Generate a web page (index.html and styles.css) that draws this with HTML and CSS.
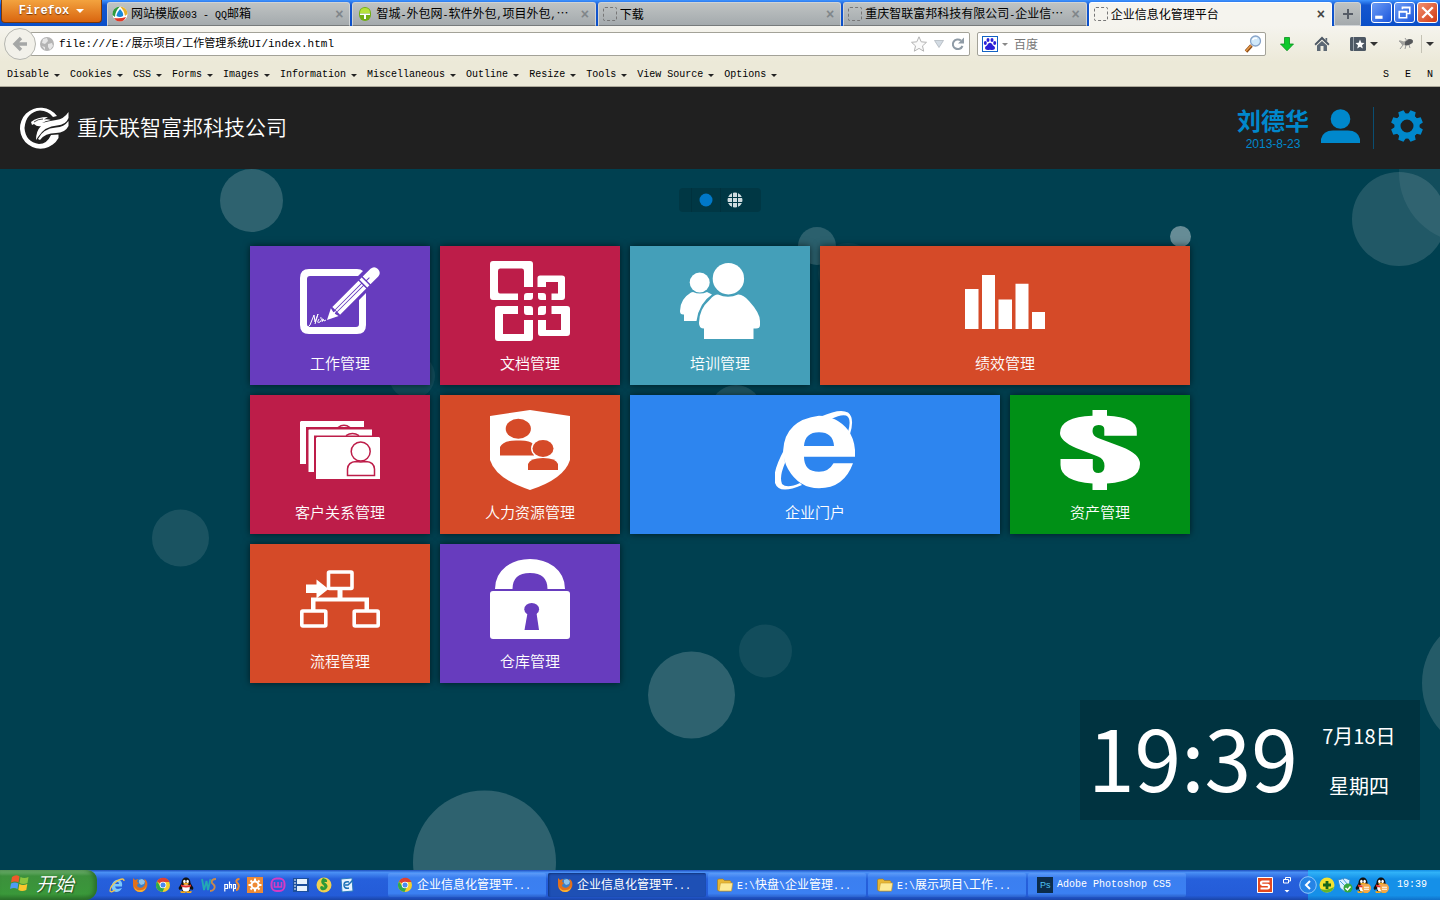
FILE: index.html
```html
<!DOCTYPE html>
<html lang="zh-CN">
<head>
<meta charset="utf-8">
<title>企业信息化管理平台</title>
<link rel="stylesheet" href="styles.css">
</head>
<body>
<svg class="defs" aria-hidden="true">
  <symbol id="chrome" viewBox="0 0 16 16"><circle cx="8" cy="8" r="7" fill="#f4cf2c"/><path d="M8 8L2 4.400A7 7 0 0 1 14.500 5H8Z" fill="#dd4132"/><path d="M2 4.400A7 7 0 0 0 7.500 15L10 9.500 5.400 9.500Z" fill="#2da94f"/><circle cx="8" cy="8" r="3.300" fill="#fff"/><circle cx="8" cy="8" r="2.500" fill="#4a8af0"/></symbol>
  <symbol id="firefox" viewBox="0 0 16 16"><circle cx="8.500" cy="7.500" r="6" fill="#3b7fc9"/><path d="M7 3l3-1 3 2-1 3-3 1-2-2z" fill="#8fc3ea"/><path d="M1 1l2 2 3-1-1 3 2 1-2 2c0 3 5 4 7 1 2-2 1-5 0-7 3 1 4 4 3 8-1 3-4 5-7 5-4 0-7-3-7-7z" fill="#e2701b"/><path d="M2 8c0 4 4 6 7 5 3 0 5-2 5-4 0 4-3 6-6 6-4 0-6-3-6-7z" fill="#f9b233"/></symbol>
  <symbol id="qq" viewBox="0 0 16 16"><path d="M3.500 6c0-7.500 9-7.500 9 0l3 5-1 2-2-1-1 3H4.500l-1-3-2 1-1-2z" fill="#111"/><ellipse cx="8" cy="11" rx="3.800" ry="3.800" fill="#fff"/><ellipse cx="6.400" cy="4.500" rx="1.300" ry="1.700" fill="#fff"/><ellipse cx="9.600" cy="4.500" rx="1.300" ry="1.700" fill="#fff"/><path d="M3 7.500q5 2 10 0v2q-5 2-10 0z" fill="#e3302b"/><ellipse cx="8" cy="6.700" rx="2.800" ry="1" fill="#f6a91c"/><path d="M2 14.300h5.500v1.700h-4.500zM8.500 14.300h5.500l-1 1.700h-4.500z" fill="#f6a91c"/></symbol>
  <symbol id="qq-off" viewBox="0 0 16 16"><use href="#qq"/><circle cx="11.500" cy="11" r="4.500" fill="#f3a84c"/><path d="M9 9.800h5v1H9zM9 11.800h5v1H9z" fill="#fff"/></symbol>
  <symbol id="folder" viewBox="0 0 16 16"><path d="M.5 3L1.500 2H6l1.500 1.500H13l1 1V14H1.500l-1-1z" fill="#e8b836" stroke="#a3771a" stroke-width=".6"/><path d="M3.500 6H15.700L14.500 14H2Z" fill="#fdeb96" stroke="#c99b2a" stroke-width=".6"/></symbol>
</svg>

<header class="browser">
  <div class="tabbar">
    <button class="fx-button"><span>Firefox</span><i class="caret"></i></button>
    <nav class="tabs">
      <div class="tab"><svg class="fav" viewBox="0 0 16 16"><circle cx="8" cy="8" r="7.500" fill="#fff"/><path d="M8 .5A7.500 7.500 0 0 0 .5 9L3 11Q3 5 8 .5Z" fill="#2f9a3c"/><path d="M8 .5Q15 1 15.500 8L13 10Q12 4 8 .5Z" fill="#e8b028"/><path d="M2 12Q8 13 14 11 12 15.500 8 15.500T2 12Z" fill="#e03a28"/><path d="M8 3Q12 7 11 10 8 12 4.500 10 4.500 7 8 3Z" fill="#1788d8"/></svg><span class="tab-title">网站模版<span class="lt">003 - QQ</span>邮箱</span><button class="tab-x" aria-label="关闭">×</button></div>
      <div class="tab"><svg class="fav" viewBox="0 0 16 16"><rect x="2" y="1" width="12" height="14" rx="6" fill="#71ae14"/><path d="M3 7Q3 2 8 2T13 7Z" fill="#b6e23a"/><path d="M3 7.500H13V9H9V13H7V9H3Z" fill="#fff"/></svg><span class="tab-title">智城<span class="lt">-</span>外包网<span class="lt">-</span>软件外包<span class="lt">,</span>项目外包<span class="lt">,</span>…</span><button class="tab-x" aria-label="关闭">×</button></div>
      <div class="tab"><i class="fav blank"></i><span class="tab-title">下载</span><button class="tab-x" aria-label="关闭">×</button></div>
      <div class="tab"><i class="fav blank"></i><span class="tab-title">重庆智联富邦科技有限公司<span class="lt">-</span>企业信…</span><button class="tab-x" aria-label="关闭">×</button></div>
      <div class="tab active"><i class="fav blank"></i><span class="tab-title">企业信息化管理平台</span><button class="tab-x" aria-label="关闭">×</button></div>
    </nav>
    <button class="new-tab" aria-label="新标签页"><svg viewBox="0 0 12 12"><path d="M6 1V11M1 6H11" stroke="#555c66" stroke-width="2"/></svg></button>
    <div class="win-buttons">
      <button class="win" aria-label="最小化"><svg viewBox="0 0 18 18"><path d="M3 12h7v3H3z" fill="#fff"/></svg></button>
      <button class="win" aria-label="还原"><svg viewBox="0 0 18 18" fill="none" stroke="#fff" stroke-width="1.500"><path d="M7 6V4H14V10H11M7 4.500H14"/><path d="M4 8H11V14H4ZM4 8.500H11"/></svg></button>
      <button class="win close" aria-label="关闭窗口"><svg viewBox="0 0 18 18"><path d="M4 4L14 14M14 4L4 14" stroke="#fff" stroke-width="2.200"/></svg></button>
    </div>
  </div>

  <div class="navbar">
    <button class="back" aria-label="后退"><svg viewBox="0 0 18 18"><path d="M10 3L4 9L10 15M4 9H16" fill="none" stroke="#a5a7a6" stroke-width="3.400"/></svg></button>
    <div class="url">
      <svg class="globe" viewBox="0 0 14 14"><circle cx="7" cy="7" r="7" fill="#b4b4b4"/><path d="M3 2l4-1 1 3-3 3-3-1zM8 7l4-1 1 3-3 4-2-3zM2 9l3 1v3z" fill="#e6e6e6"/></svg>
      <input class="url-input" type="text" aria-label="地址" value="file:///E:/展示项目/工作管理系统UI/index.html">
      <svg class="i16" viewBox="0 0 16 16"><path d="M8 .8L10.200 5.800 15.500 6.300 11.500 9.900 12.700 15.200 8 12.400 3.300 15.200 4.500 9.900 .5 6.300 5.800 5.800Z" fill="#fafafa" stroke="#b4b4b4"/></svg>
      <svg class="i10" viewBox="0 0 10 10"><path d="M.5 1.500H9.500L5 8.500Z" fill="#d3dbe3" stroke="#a9b0b8" stroke-width=".7"/></svg>
      <svg class="i14" viewBox="0 0 14 14"><path d="M11.500 9A5 4.800 0 1 1 10 3.500" fill="none" stroke="#8f9ba6" stroke-width="2"/><path d="M13 .5V6.500H7Z" fill="#8f9ba6"/></svg>
    </div>
    <div class="search">
      <svg class="i16" viewBox="0 0 16 16"><rect x=".5" y=".5" width="15" height="15" fill="#fff" stroke="#1463c4"/><g fill="#2a20d8"><ellipse cx="3.300" cy="7" rx="1.500" ry="2"/><ellipse cx="6" cy="3.900" rx="1.500" ry="2"/><ellipse cx="10" cy="3.900" rx="1.500" ry="2"/><ellipse cx="12.700" cy="7" rx="1.500" ry="2"/><path d="M8 6.700Q10 7 11 9.500 14 11 12.500 13.300 11 14.500 8 13.700 5 14.500 3.500 13.300 2 11 5 9.500 6 7 8 6.700Z"/></g></svg>
      <i class="caret grey"></i>
      <input class="search-input" type="text" aria-label="搜索" placeholder="百度">
      <svg class="i18" viewBox="0 0 18 18"><path d="M2 16.500L7.500 10.500" stroke="#8d4a12" stroke-width="3.400"/><path d="M2 16L7 10.500" stroke="#e89a4a" stroke-width="1.500"/><circle cx="11.500" cy="6" r="5" fill="#cfe8fa" stroke="#88a4c8" stroke-width="1.300"/><path d="M8.500 5Q10 2.500 13 3.500" fill="none" stroke="#fff" stroke-width="1.500"/></svg>
    </div>
    <div class="tools">
      <button aria-label="下载"><svg class="i14" viewBox="0 0 14 14"><path d="M4.500 .5H9.500V7H13.500L7 13.800 .5 7H4.500Z" fill="#0ec92c" stroke="#08901c" stroke-width=".8"/></svg></button>
      <button aria-label="主页"><svg class="i16" viewBox="0 0 16 16"><path d="M8 .5L15.500 8 14.300 9.400 8 3.400 1.700 9.400 .5 8Z" fill="#4c5763"/><path d="M3 9.500L8 5 13 9.500V15H9.500V10H6.500V15H3Z" fill="#5c6874"/><path d="M11.500 2H13.200V5.500L11.500 4Z" fill="#5c6874"/></svg></button>
      <button class="with-caret" aria-label="书签"><svg class="i16" viewBox="0 0 16 16"><rect x="0" y="1" width="16" height="14" rx="1.500" fill="#4c5763"/><path d="M3.500 1V15" stroke="#99a2aa"/><path d="M10 3.500L11.300 6.700 14.500 7 12 9.200 12.800 12.500 10 10.700 7.200 12.500 8 9.200 5.500 7 8.700 6.700Z" fill="#fff"/></svg><i class="caret"></i></button>
      <button aria-label="扩展"><svg class="i16" viewBox="0 0 16 16"><path d="M1 4L6 5.500 10 3 14 3 15 6 12 8 9 9.500 4 9Z" fill="#a3a39e"/><path d="M7 6.500Q8 4 12 3L15 4.500 14.500 7 11 9 7 9.500Z" fill="#55575a"/><path d="M5 9L2 13M8 9L7 13M11 9L12 12M1 5L5 8M9 5L7 2" stroke="#999"/></svg></button>
      <i class="rule"></i><i class="caret"></i>
    </div>
  </div>

  <div class="menubar">
    <button>Disable<i></i></button><button>Cookies<i></i></button><button>CSS<i></i></button><button>Forms<i></i></button><button>Images<i></i></button><button>Information<i></i></button><button>Miscellaneous<i></i></button><button>Outline<i></i></button><button>Resize<i></i></button><button>Tools<i></i></button><button>View Source<i></i></button><button>Options<i></i></button>
    <span class="flags"><span>S</span><span>E</span><span>N</span></span>
  </div>
</header>

<div class="topbar">
  <svg class="logo" viewBox="0 0 49 42"><path d="M37 9A20.500 20.500 0 1 0 38.500 31V27.500L31 28Q27 37 19 37 5.500 35 4.500 21 6 5 20 3.500 28 3.500 33 10Z" fill="#fff"/><path d="M11 15Q17 10 28 10L24 12.500Q28 12 31 13Q25 14 22 16Q29 14 36 13Q44 12 48.500 5V11Q46 18 37 18.500Q25 19 18 30L16 33Q16 24 21 19Q17 20 14 17L12 18Z" fill="#fff"/><path d="M18 32Q23 21.500 36 20.500Q44 20 48.500 14V19Q45 26 36 26Q25 26 20 33Z" fill="#fff"/><path d="M14 15Q18 12 23 12" stroke="#202020" fill="none" stroke-width=".8"/></svg>
  <h1>重庆联智富邦科技公司</h1>
  <div class="user"><strong>刘德华</strong><time>2013-8-23</time></div>
  <svg class="avatar" viewBox="0 0 39 34"><circle cx="19.500" cy="10" r="9.800" fill="#0088cc"/><path d="M0 34V30Q2 21.500 12 21.500H27Q37 21.500 39 30V34Z" fill="#0088cc"/></svg>
  <i class="divider"></i>
  <button class="gear" aria-label="设置"><svg viewBox="-16 -16 32 32"><circle r="9.500" fill="none" stroke="#0088cc" stroke-width="6"/><g fill="#0088cc"><path id="tooth" d="M-5.500 -10.500L-3.500 -12 -2.800 -16H2.800L3.500 -12 5.500 -10.500Z" transform="rotate(22.500)"/><use href="#tooth" transform="rotate(45)"/><use href="#tooth" transform="rotate(90)"/><use href="#tooth" transform="rotate(135)"/><use href="#tooth" transform="rotate(180)"/><use href="#tooth" transform="rotate(225)"/><use href="#tooth" transform="rotate(270)"/><use href="#tooth" transform="rotate(315)"/></g></svg></button>
</div>

<main class="desktop">
  <svg class="bubbles" aria-hidden="true" fill="#fff">
    <circle cx="251.500" cy="31.500" r="31.500" opacity=".18"/>
    <circle cx="817" cy="77" r="19" opacity=".17"/>
    <circle cx="848" cy="104" r="30" opacity=".05"/>
    <circle cx="1180.500" cy="67.500" r="10.500" opacity=".4"/>
    <circle cx="1399" cy="50" r="47" opacity=".13"/>
    <circle cx="1469" cy="4" r="70" opacity=".07"/>
    <circle cx="412" cy="207" r="23" opacity=".07"/>
    <circle cx="736" cy="242" r="26" opacity=".12"/>
    <circle cx="180.500" cy="369" r="28.500" opacity=".1"/>
    <circle cx="765.500" cy="482" r="26.500" opacity=".07"/>
    <circle cx="691.500" cy="526" r="43.500" opacity=".18"/>
    <circle cx="484.500" cy="693" r="71.500" opacity=".18"/>
    <circle cx="1492" cy="514" r="70" opacity=".14"/>
  </svg>

  <nav class="pager">
    <button aria-label="第一页"><svg viewBox="0 0 16 16"><circle cx="8" cy="8" r="6.500" fill="#0078c8"/></svg></button>
    <button aria-label="第二页"><svg viewBox="0 0 16 16"><circle cx="8" cy="8" r="7.500" fill="#cfdcdf"/><path d="M5.500 0V16M10.500 0V16M0 5.500H16M0 10.500H16" stroke="#003744"/></svg></button>
  </nav>

  <section class="tiles">
    <a class="tile purple" href="#"><svg viewBox="0 0 80 80"><path d="M9 8H57Q61 8 63 10L58 15H10Q7 15 7 18V63Q7 66 10 66H56Q59 66 59 63V39L66 32V64Q66 73 57 73H9Q0 73 0 64V17Q0 8 9 8Z"/><g transform="translate(27 59) rotate(-45)"><path d="M0 0L11 -5.500 10 -1 13 0 10 1 11 5.500Z"/><path d="M13 -5.500H50V-1.800H13ZM13 -1H50V1H13ZM13 1.800H50V5.500H13Z"/><path d="M51.500 -5.500H54.500V5.500H51.500ZM56 -5.500H67Q72 -5 72 0T67 5.500H56V.5H60V-.5H56Z"/></g><path d="M6 66Q9 66 10 64L14 54 15 61 18 53 15 63M19 58Q16 63 20 61 24 56 20 57M22 61L23 58 24 60 26 59" fill="none" stroke="#fff" stroke-width="1"/></svg><span>工作管理</span></a>
    <a class="tile crimson" href="#"><svg viewBox="0 0 80 80"><path d="M3 0H40Q43 0 43 3V26H34V10Q34 7.500 32 7.500H10Q8 7.500 8 10V30Q8 32.500 10 32.500H28V39H3Q0 39 0 36V3Q0 0 3 0ZM47.500 26V17Q47.500 14.500 50 14.500H72Q75 14.500 75 17V36Q75 39 72 39H61.500V32.500H68V21H56V26ZM8 45H28V53H13V73H34V59H43V77Q43 80 40 80H8Q5 80 5 77V48Q5 45 8 45ZM61.500 45H77Q80 45 80 48V72Q80 75 77 75H50.500Q48 75 48 72V59H56V69H71V53H61.500Z"/><path d="M37 32H43V36Q43 39 40 39H34V35Q34 32 37 32ZM48 32H53Q56 32 56 35V39H51Q48 39 48 36ZM34 45H40Q43 45 43 48V54H37Q34 54 34 51ZM51 45H56V51Q56 54 53 54H48V48Q48 45 51 45Z"/></svg><span>文档管理</span></a>
    <a class="tile teal" href="#"><svg viewBox="0 0 80 80"><circle cx="48.400" cy="17.700" r="15.700"/><circle cx="19.700" cy="21.500" r="10"/><path d="M38 33.500Q48 38 58 33.500Q63 33 69 40Q80 52 80 60V64Q80 67.500 76 67.500H73.500V78H24V67.500Q19 67.500 19 62Q19 48 30 38.500Q34 33.500 38 33.500Z"/><path d="M13 31Q20 34 27 31L32 33.500Q19 42 16.500 60H4V53.500Q0 54 0 50Q0 38 11 31.500Z"/></svg><span>培训管理</span></a>
    <a class="tile orange wide" href="#"><svg viewBox="0 0 80 80"><path d="M0 28H13.500V68H0ZM17 14H30V68H17ZM33.500 38.500H47V68H33.500ZM50.500 22.700H63.500V68H50.500ZM67 51H80V68H67Z"/></svg><span>绩效管理</span></a>
    <a class="tile crimson" href="#"><svg viewBox="0 0 80 80"><path d="M1 11H64V17H6V54H0V12Z"/><path d="M9 19.500H72V25.500H14V62H8.500V20Z"/><path d="M17 27H79L80 28V69H16V28Z"/><g fill="none" stroke="#bd1d49" stroke-width="1.500"><path d="M38 17.500Q44 13 50 17.500M46 25.700Q52.500 21.500 59 25.700"/><circle cx="60.700" cy="41.500" r="9.500"/><path d="M47.500 65.500V59Q48 52 56 51.500L60.700 52 66 51.500Q74 52 74.500 59V65.500Z"/></g></svg><span>客户关系管理</span></a>
    <a class="tile orange" href="#"><svg viewBox="0 0 80 80"><path d="M40 0L80 6V50Q74 69 40 80Q6 69 0 50V6Z"/><g fill="#d54a28"><ellipse cx="28.300" cy="18.800" rx="12.600" ry="10"/><path d="M10 45.500V37Q13 30 28 30.500Q40 30 43 34L44 45.500Z"/><ellipse cx="53" cy="38.500" rx="12" ry="10" fill="#fff"/><ellipse cx="53" cy="38.500" rx="10.500" ry="8.500"/><path d="M38 60V54Q40 48 53 48T68 54V60Z"/></g></svg><span>人力资源管理</span></a>
    <a class="tile blue wide" href="#"><svg viewBox="0 0 80 80"><path fill-rule="evenodd" d="M80 46.700H29Q29 61.700 44 61.700Q54 61.700 58.500 53.300H78Q69 78.300 44 78.300Q24 78.300 13 59Q8 50 8.200 40Q10 10 44 5.700Q62 6 73 20Q81 31 80 46.700ZM29 36H59Q58 22.300 44 22.300Q30 22.300 29 36Z"/><path d="M46 6.500Q65 -2 73 2.500Q80 8 75 24L73 22Q77 8 71 5.500Q66 4 56 9ZM9 40Q-3 62 0 73Q4 85 27 75L25 73Q12 79 7 74Q4 67 10 53Z"/></svg><span>企业门户</span></a>
    <a class="tile green" href="#"><svg viewBox="0 0 80 80"><path d="M32.500 0H47V5.700Q76.800 7 76.800 21V25.700H44.300V19Q44 15 38.500 15Q32.500 15 32.500 21Q32.500 26 38 28L62 37Q80 44 80 54Q80 71 47 73.500V80H32.500V73.500Q.5 71 .5 55V49H32.800V58Q33 63 38.500 63Q44.500 63 44.500 56Q44.500 49 38 46.500L16 38Q0 31 0 23Q0 7 32.500 5.700Z"/></svg><span>资产管理</span></a>
    <a class="tile orange" href="#"><svg viewBox="0 0 80 80"><path d="M6 25.500H16.500V20.500L28.500 30 16.500 39.500V34H6Z"/><g fill="none" stroke="#fff" stroke-width="3.600"><rect x="28.500" y="13" width="23.500" height="16.500" rx="1"/><rect x="1.800" y="52" width="24" height="15" rx="1"/><rect x="54.200" y="52" width="24" height="15" rx="1"/></g><path d="M37.500 30H42.500V38.500H69V51H64.500V42.500H15.500V51H11V38.500H37.500Z"/></svg><span>流程管理</span></a>
    <a class="tile purple" href="#"><svg viewBox="0 0 80 80"><path d="M5 30Q5 16 16 7.500Q26 0 40 0T64 7.500Q75 16 75 30H57.500Q57.500 14 40 14T22.500 30Z"/><rect y="32" width="80" height="48" rx="3"/><g fill="#673cbe"><ellipse cx="41.700" cy="50.200" rx="7.400" ry="6.200"/><path d="M37.500 54H46.500L49 71H34.500Z"/></g></svg><span>仓库管理</span></a>
  </section>

  <aside class="clock">
    <time class="hours">19:39</time>
    <div class="date"><span>7月18日</span><span>星期四</span></div>
  </aside>
</main>

<footer class="taskbar">
  <button class="start"><svg viewBox="0 0 20 18"><path d="M2 3Q6 0 9.500 2.500L8.500 8.500Q5 6.500 1 8.500Z" fill="#f0592b"/><path d="M10.500 3Q14 5 18.500 3L17.500 9Q13 11 9.500 9Z" fill="#8bc53f"/><path d="M1 9.500Q5 7.500 8.300 9.500L7.500 15Q4 13 0 15Z" fill="#4f9bf5"/><path d="M9.300 10Q13 12 17.300 10L16.300 16Q12 18 8.300 16Z" fill="#fbc62d"/></svg><span>开始</span></button>
  <div class="quick">
    <svg viewBox="0 0 16 16"><path d="M13 9.500H6Q6.500 12 9 12L13 11Q11 15 7 15 2.500 14 2.500 9 4 2.500 9.500 2.500 14 4 13 9.500ZM6 7H10Q10 5 8.500 5T6 7Z" fill="#7cc9fb" fill-rule="evenodd"/><path d="M15 4Q15 0 8 4 1 9 1 14 2 16 6 13" fill="none" stroke="#f3c54c" stroke-width="1.300"/></svg>
    <svg viewBox="0 0 16 16"><use href="#firefox"/></svg>
    <svg viewBox="0 0 16 16"><use href="#chrome"/></svg>
    <svg viewBox="0 0 16 16"><use href="#qq"/></svg>
    <svg viewBox="0 0 16 16" fill="none" stroke-width="1.800"><path d="M1 2L3 13 5.500 4 7 13 9.500 2" stroke="#23a9b4"/><path d="M15 2Q10 2 11 6 15 9 13 12 12 14 9 14" stroke="#c98a4e"/></svg>
    <svg viewBox="0 0 16 16" fill="none" stroke-width="1.200"><path d="M.8 14.500V7.500H3.500V11.500H1M5.500 4.500V11.500M5.500 7.500H7.500V11.500M9.500 14.500V7.500H11.500V11.500H9.500" stroke="#fff"/><path d="M15.500 2Q12 2 12.500 5 15.500 8 14.500 10 14 13 12 13" stroke="#e98931" stroke-width="2"/></svg>
    <svg viewBox="0 0 16 16"><path d="M0 0H16V16H0Z" fill="#ee8a35"/><circle cx="8" cy="8" r="3.500" fill="none" stroke="#fff" stroke-width="2"/><path d="M8 1.500V4M8 12V14.500M1.500 8H4M12 8H14.500M3.500 3.500L5 5M11 11L12.500 12.500M3.500 12.500L5 11M11 5L12.500 3.500" stroke="#fff" stroke-width="2"/></svg>
    <svg viewBox="0 0 16 16" fill="none" stroke="#d53bc4"><rect x="1.500" y="1.500" width="13" height="12.500" rx="5" stroke-width="2"/><path d="M4.500 5V10H8V5M8 10H11.500V5" stroke-width="1.600"/></svg>
    <svg viewBox="0 0 16 16"><path d="M0 1H16V15H0Z" fill="#1d4f9c"/><path d="M4 2H14V7H4ZM4 9H14V14H4Z" fill="#e8f2fc"/><path d="M1 3H3M1 6H3M1 9H3M1 12H3" stroke="#fff"/></svg>
    <svg viewBox="0 0 16 16"><circle cx="8" cy="8" r="7.500" fill="#f1d04e"/><path d="M7 1Q12 2 11 5L8 5Q13 8 11 11 9 14 5.500 13 3 11 5 9 8 9 8 11 9 9 6 7 4 4 7 1Z" fill="#2c9a37"/></svg>
    <svg viewBox="0 0 16 16"><path d="M2 2L13 1 14 14 3 15Z" fill="#e7f3ff" stroke="#2b79bd"/><path d="M10 5Q5 4 5 8T10 11M6 8H9L14 3" fill="none" stroke="#1a6fb6" stroke-width="1.500"/></svg>
  </div>
  <div class="tasks">
    <button class="task"><svg viewBox="0 0 16 16"><use href="#chrome"/></svg><span>企业信息化管理平<span class="lt">...</span></span></button>
    <button class="task current"><svg viewBox="0 0 16 16"><use href="#firefox"/></svg><span>企业信息化管理平<span class="lt">...</span></span></button>
    <button class="task"><svg viewBox="0 0 16 16"><use href="#folder"/></svg><span><span class="lt">E:\</span>快盘<span class="lt">\</span>企业管理<span class="lt">...</span></span></button>
    <button class="task"><svg viewBox="0 0 16 16"><use href="#folder"/></svg><span><span class="lt">E:\</span>展示项目<span class="lt">\</span>工作<span class="lt">...</span></span></button>
    <button class="task"><svg viewBox="0 0 16 16"><path d="M0 0H16V16H0Z" fill="#0b2c4a"/><text x="3" y="11" font-size="9" font-family="Liberation Sans, sans-serif" fill="#4fc1f5">Ps</text></svg><span class="lt">Adobe Photoshop CS5</span></button>
  </div>
  <div class="lang">
    <svg viewBox="0 0 16 16"><path d="M.5 .5H15.500V15.500H.5Z" fill="#e4491f" stroke="#fff"/><path d="M12.500 4.500H5.500Q4 4.500 4 6T5.500 7.800H10.500Q12 7.800 12 9.700T10.500 11.500H3.500" fill="none" stroke="#fff" stroke-width="2.200"/></svg>
    <svg class="lang-opts" viewBox="0 0 8 18"><path d="M2.500 3V1.500H7.500V5H6M.5 3.500H5.500V7H.5Z" fill="none" stroke="#fff"/><path d="M1.500 14H6.500L4 16.500Z" fill="#fff"/></svg>
  </div>
  <div class="tray">
    <button class="expand" aria-label="显示隐藏图标"><svg viewBox="0 0 18 18"><circle cx="9" cy="9" r="8.300" fill="#2584e6" stroke="#8fc9fb"/><path d="M11 5L7 9L11 13" fill="none" stroke="#fff" stroke-width="2"/></svg></button>
    <svg viewBox="0 0 16 16"><circle cx="8" cy="8" r="7.500" fill="#f4e22f"/><path d="M1.500 12A7.500 7.500 0 0 0 15 10Q8 14 1.500 12Z" fill="#62b42b"/><path d="M8 4V12M4 8H12" stroke="#17661b" stroke-width="2.800"/></svg>
    <svg viewBox="0 0 16 16"><path d="M1 3L8 1 13 3 12 10 8 15 3 11Z" fill="#d9f0ff" stroke="#2f8bd0"/><path d="M3 4L9 10M6 2L11 8" stroke="#439fe0"/><circle cx="11" cy="11" r="4.500" fill="#35a83e"/><path d="M8.500 11L10.500 13 13.500 9.500" fill="none" stroke="#fff" stroke-width="1.500"/></svg>
    <svg viewBox="0 0 16 16"><use href="#qq-off"/></svg>
    <svg viewBox="0 0 16 16"><use href="#qq-off"/></svg>
    <time class="lt">19:39</time>
  </div>
</footer>
</body>
</html>
```
FILE: styles.css
```css
* { box-sizing: border-box; }

body {
  margin: 0;
  min-height: 100vh;
  display: flex;
  flex-direction: column;
  overflow-x: hidden;
  font-family: "Noto Sans CJK SC", sans-serif;
  font-size: 12px;
  line-height: 16px;
  background: #004050;
}

button {
  margin: 0;
  padding: 0;
  border: 0;
  background: none;
  font: inherit;
  color: inherit;
}

input {
  min-width: 0;
  padding: 0;
  border: 0;
  outline: 0;
  background: none;
}

svg { display: block; flex: none; }

.defs { position: absolute; width: 0; height: 0; }

.lt { font-family: "Liberation Mono", monospace; font-size: 10px; }

.i10 { width: 10px; height: 10px; }
.i14 { width: 14px; height: 14px; }
.i16 { width: 16px; height: 16px; }
.i18 { width: 18px; height: 18px; }

.caret {
  border: 4px solid transparent;
  border-top-color: #333;
  border-bottom: 0;
}
.caret.grey { border-width: 3px; border-top-color: #888; border-bottom: 0; }

/* browser chrome */
.browser {
  background: #ece9d8;
  border-bottom: 1px solid #aca899;
}

.tabbar {
  display: flex;
  height: 26px;
  padding: 0 2px 0 1px;
  background: linear-gradient(#3e93ff, #1456cf 20%, #0a4fc8);
}

.fx-button {
  display: flex;
  align-items: center;
  justify-content: center;
  gap: 7px;
  width: 101px;
  height: 23px;
  border: 1px solid #7c3806;
  border-top: 0;
  border-radius: 0 0 4px 4px;
  background: linear-gradient(#f3a33f, #d9650f);
  color: #fff;
  font: bold 12px/16px "Liberation Mono", monospace;
  text-shadow: 0 1px 1px #7c3806;
}
.fx-button .caret { border-top-color: #fff; }

.tabs {
  flex: 1;
  min-width: 0;
  display: flex;
  gap: 2px;
  margin-left: 5px;
  padding-top: 2px;
}

.tab {
  flex: 1 1 0;
  min-width: 0;
  display: flex;
  align-items: center;
  gap: 3px;
  padding: 0 6px 0 4px;
  border: 1px solid #d0d4d6;
  border-bottom: 1px solid #777b7c;
  border-radius: 3px 3px 0 0;
  background: linear-gradient(#bfc3c3, #a4aaad);
}
.tab.active {
  background: #f5f4ee;
  border-color: #fff #fff #f5f4ee;
}

.fav { width: 16px; height: 16px; flex: none; }
.blank {
  width: 14px;
  height: 14px;
  border: 1px dashed #777;
  border-radius: 2px;
}
.tab-title { flex: 1; min-width: 0; overflow: hidden; white-space: nowrap; }
.tab-x { font: bold 14px/14px "Liberation Sans", sans-serif; color: #80868a; }
.active .tab-x { color: #444; }

.new-tab {
  display: grid;
  place-items: center;
  width: 27px;
  margin: 2px 10px 0 2px;
  border: 1px solid #d0d4d6;
  border-radius: 3px 3px 0 0;
  background: linear-gradient(#bfc3c3, #a4aaad);
}
.new-tab svg { width: 12px; height: 12px; }

.win-buttons { display: flex; gap: 2px; padding-top: 2px; }
.win {
  width: 21px;
  height: 21px;
  border: 1px solid #fff;
  border-radius: 3px;
  background: linear-gradient(135deg, #6c9cf5, #1b56dc);
}
.win svg { width: 19px; height: 19px; }
.win.close { background: linear-gradient(135deg, #f09070, #d33a12); }

.navbar {
  display: flex;
  align-items: center;
  height: 36px;
  padding: 0 6px 0 4px;
  background: linear-gradient(#f5f4ee, #ece9d8);
}

.back {
  position: relative;
  z-index: 1;
  display: grid;
  place-items: center;
  width: 32px;
  height: 32px;
  border: 1px solid #b5b6b0;
  border-radius: 50%;
  background: #f2f1ea;
}
.back svg { width: 18px; height: 18px; }

.url, .search {
  display: flex;
  align-items: center;
  height: 24px;
  border: 1px solid #a3a298;
  border-radius: 2px;
  background: #fff;
}
.url {
  flex: 1;
  margin-left: -6px;
  padding: 0 4px 0 9px;
  gap: 7px;
}
.globe { width: 14px; height: 14px; }
.url-input {
  flex: 1;
  margin-left: -2px;
  font: 11px/16px "Liberation Mono", "Noto Sans CJK SC", monospace;
  color: #000;
}
.search {
  width: 289px;
  margin-left: 7px;
  padding: 0 3px 0 4px;
  gap: 4px;
}
.search-input {
  flex: 1;
  margin-left: 2px;
  font: 12px/16px "Noto Sans CJK SC", sans-serif;
}
.search-input::placeholder { color: #777; opacity: 1; }

.tools { display: flex; align-items: center; margin-left: 14px; }
.tools button { margin-right: 20px; }
.tools .with-caret { display: flex; align-items: center; gap: 4px; }
.tools button:nth-of-type(4) { margin-right: 7px; }
.rule { width: 1px; height: 18px; margin-right: 4px; background: #c4c2b4; }

.menubar {
  display: flex;
  align-items: center;
  height: 24px;
  padding: 2px 7px 0;
  font: 10px/16px "Liberation Mono", monospace;
}
.menubar button {
  display: flex;
  align-items: center;
  gap: 5px;
  margin-right: 10px;
  white-space: nowrap;
}
.menubar button i {
  border: 3px solid transparent;
  border-top-color: #222;
  border-bottom: 0;
}
.flags { display: flex; gap: 16px; margin-left: auto; }

/* application header */
.topbar {
  display: flex;
  align-items: center;
  height: 82px;
  padding: 0 17px 0 20px;
  background: #202020;
  color: #0088cc;
}
.logo { width: 49px; height: 42px; }
.topbar h1 {
  margin: 0 auto 4px 8px;
  font-size: 21px;
  line-height: 28px;
  font-weight: 350;
  color: #fff;
}
.user { display: flex; flex-direction: column; align-items: center; }
.user strong { font-size: 24px; line-height: 32px; }
.user time { font: 12px/16px "Liberation Sans", Arial, sans-serif; }
.avatar { width: 39px; height: 34px; margin: 0 0 4px 12px; }
.divider { width: 1px; height: 42px; margin: 0 17px 0 13px; background: #0a4e72; }
.gear { margin-bottom: 4px; }
.gear svg { width: 32px; height: 32px; }

/* desktop */
.desktop {
  position: relative;
  flex: 1;
  padding: 19px 20px 50px;
  overflow: hidden;
}
.bubbles {
  position: absolute;
  left: 0;
  top: 0;
  width: 100%;
  height: 100%;
}

.pager {
  position: relative;
  display: flex;
  justify-content: center;
  width: 82px;
  height: 24px;
  margin: 0 auto;
  border-radius: 4px;
  background: #003744;
}
.pager button { padding: 0 6px; }
.pager button:first-child { border: 1px solid #00313d; border-width: 0 1px; }
.pager svg { width: 16px; height: 16px; }

.tiles {
  position: relative;
  display: grid;
  grid-template-columns: repeat(5, 180px);
  gap: 10px;
  justify-content: center;
  margin-top: 34px;
}
.tile {
  display: flex;
  flex-direction: column;
  align-items: center;
  gap: 11px;
  padding: 15px 0 11px;
  color: #fff;
  font-size: 15px;
  line-height: 22px;
  font-weight: 350;
  text-decoration: none;
  box-shadow: 0 0 7px rgba(0, 0, 0, .6);
}
.tile svg { width: 80px; height: 80px; fill: #fff; }
.wide { grid-column: span 2; }
.purple { background: #673cbe; }
.crimson { background: #bd1d49; }
.teal { background: #449fb9; }
.orange { background: #d54a28; }
.blue { background: #2d85ef; }
.green { background: #009016; }

.clock {
  position: absolute;
  right: 20px;
  bottom: 50px;
  display: flex;
  align-items: center;
  width: 340px;
  height: 120px;
  padding-left: 8px;
  background: #003340;
  color: #fff;
}
.hours { padding-bottom: 8px; font-size: 84px; line-height: 112px; }
.date {
  flex: 1;
  display: flex;
  flex-direction: column;
  align-items: center;
  gap: 20px;
  padding-top: 2px;
  font-size: 20px;
  line-height: 30px;
}

/* taskbar */
.taskbar {
  display: flex;
  align-items: stretch;
  height: 30px;
  background: linear-gradient(#1f4fc0, #4a90f5 8%, #2660dc 30%, #245cd8 85%, #1a45a8);
  color: #fff;
}
.start {
  display: flex;
  align-items: center;
  gap: 6px;
  width: 97px;
  padding: 0 0 4px 10px;
  border-radius: 0 10px 12px 0;
  background: linear-gradient(#7cb87c, #3c903c 20%, #3a983a 80%, #2a6f2a);
  box-shadow: inset -3px 0 4px #2a6f2a;
  font-size: 19px;
  line-height: 24px;
  font-style: italic;
  font-weight: 350;
  text-shadow: 1px 1px 1px #204f20;
}
.start svg { width: 20px; height: 18px; }
.quick { display: flex; align-items: center; gap: 7px; margin-left: 12px; }
.quick svg, .task svg, .lang svg, .tray svg { width: 16px; height: 16px; }

.tasks {
  flex: 1;
  min-width: 0;
  display: flex;
  gap: 2px;
  margin: 3px 71px 3px 33px;
}
.task {
  flex: 1 1 0;
  min-width: 0;
  display: flex;
  align-items: center;
  gap: 4px;
  padding: 0 9px;
  border-radius: 2px;
  background: linear-gradient(#5c9bf8, #3b7ff0 20%, #3b80f2 85%, #2c62cc);
  white-space: nowrap;
  overflow: hidden;
}
.task.current { background: #1e50b5; box-shadow: inset 1px 1px 2px #12357e; }

.lang { display: flex; align-items: center; gap: 10px; margin-right: 17px; }
.lang .lang-opts { width: 8px; height: 18px; }
.tray {
  display: flex;
  align-items: center;
  gap: 2px;
  padding-right: 13px;
  background: linear-gradient(#1690e6, #30b2f8 8%, #1590e8 30%, #1590e8 85%, #1070c8);
}
.tray .expand { margin-left: -9px; }
.tray .expand svg { width: 18px; height: 18px; }
.tray time { margin-left: 6px; }
```
